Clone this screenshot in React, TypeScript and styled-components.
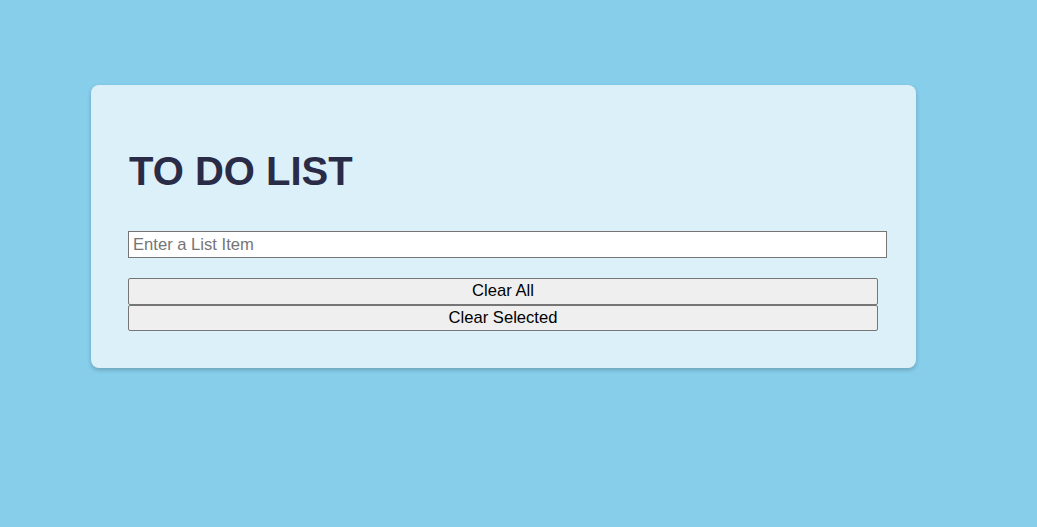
import React from "react";
import styled, { createGlobalStyle } from "styled-components";

const Global = createGlobalStyle`
  html, body {
    margin: 0;
    padding: 0;
    background: #87ceeb;
    min-height: 100%;
  }
  body {
    font-family: "Liberation Sans", Arial, sans-serif;
    min-height: 527px;
  }
`;

const Page = styled.div`
  padding: 85px 0 0 91px;
`;

const Card = styled.div`
  box-sizing: border-box;
  width: 825px;
  padding: 37px;
  background: #dcf0f9;
  border-radius: 8px;
  box-shadow: 0 2px 4px rgba(0, 0, 0, 0.22);
`;

const Title = styled.h1`
  margin: 26px 0 37px 1px;
  font-size: 40px;
  line-height: 46px;
  font-weight: 700;
  color: #2a2b47;
`;

const Input = styled.input`
  box-sizing: border-box;
  display: block;
  width: 759px;
  height: 27px;
  margin: 0 0 20px;
  padding: 1px 4px;
  font-family: "Liberation Sans", Arial, sans-serif;
  font-size: 16.6px;
  border: 1px solid #767676;
  border-radius: 0;
  background: #fff;
  &::placeholder {
    color: #757575;
  }
`;

const Buttons = styled.div`
  display: flex;
  flex-direction: column;
  width: 750px;
`;

const Button = styled.button`
  box-sizing: border-box;
  width: 100%;
  height: 26.5px;
  padding: 0;
  font-family: "Liberation Sans", Arial, sans-serif;
  font-size: 16.6px;
  color: #000;
  background: #efefef;
  border: 1px solid #767676;
  border-radius: 2px;
`;

export default function App() {
  return (
    <>
      <Global />
      <Page>
        <Card>
          <Title>TO DO LIST</Title>
          <Input type="text" placeholder="Enter a List Item" />
          <Buttons>
            <Button>Clear All</Button>
            <Button>Clear Selected</Button>
          </Buttons>
        </Card>
      </Page>
    </>
  );
}
